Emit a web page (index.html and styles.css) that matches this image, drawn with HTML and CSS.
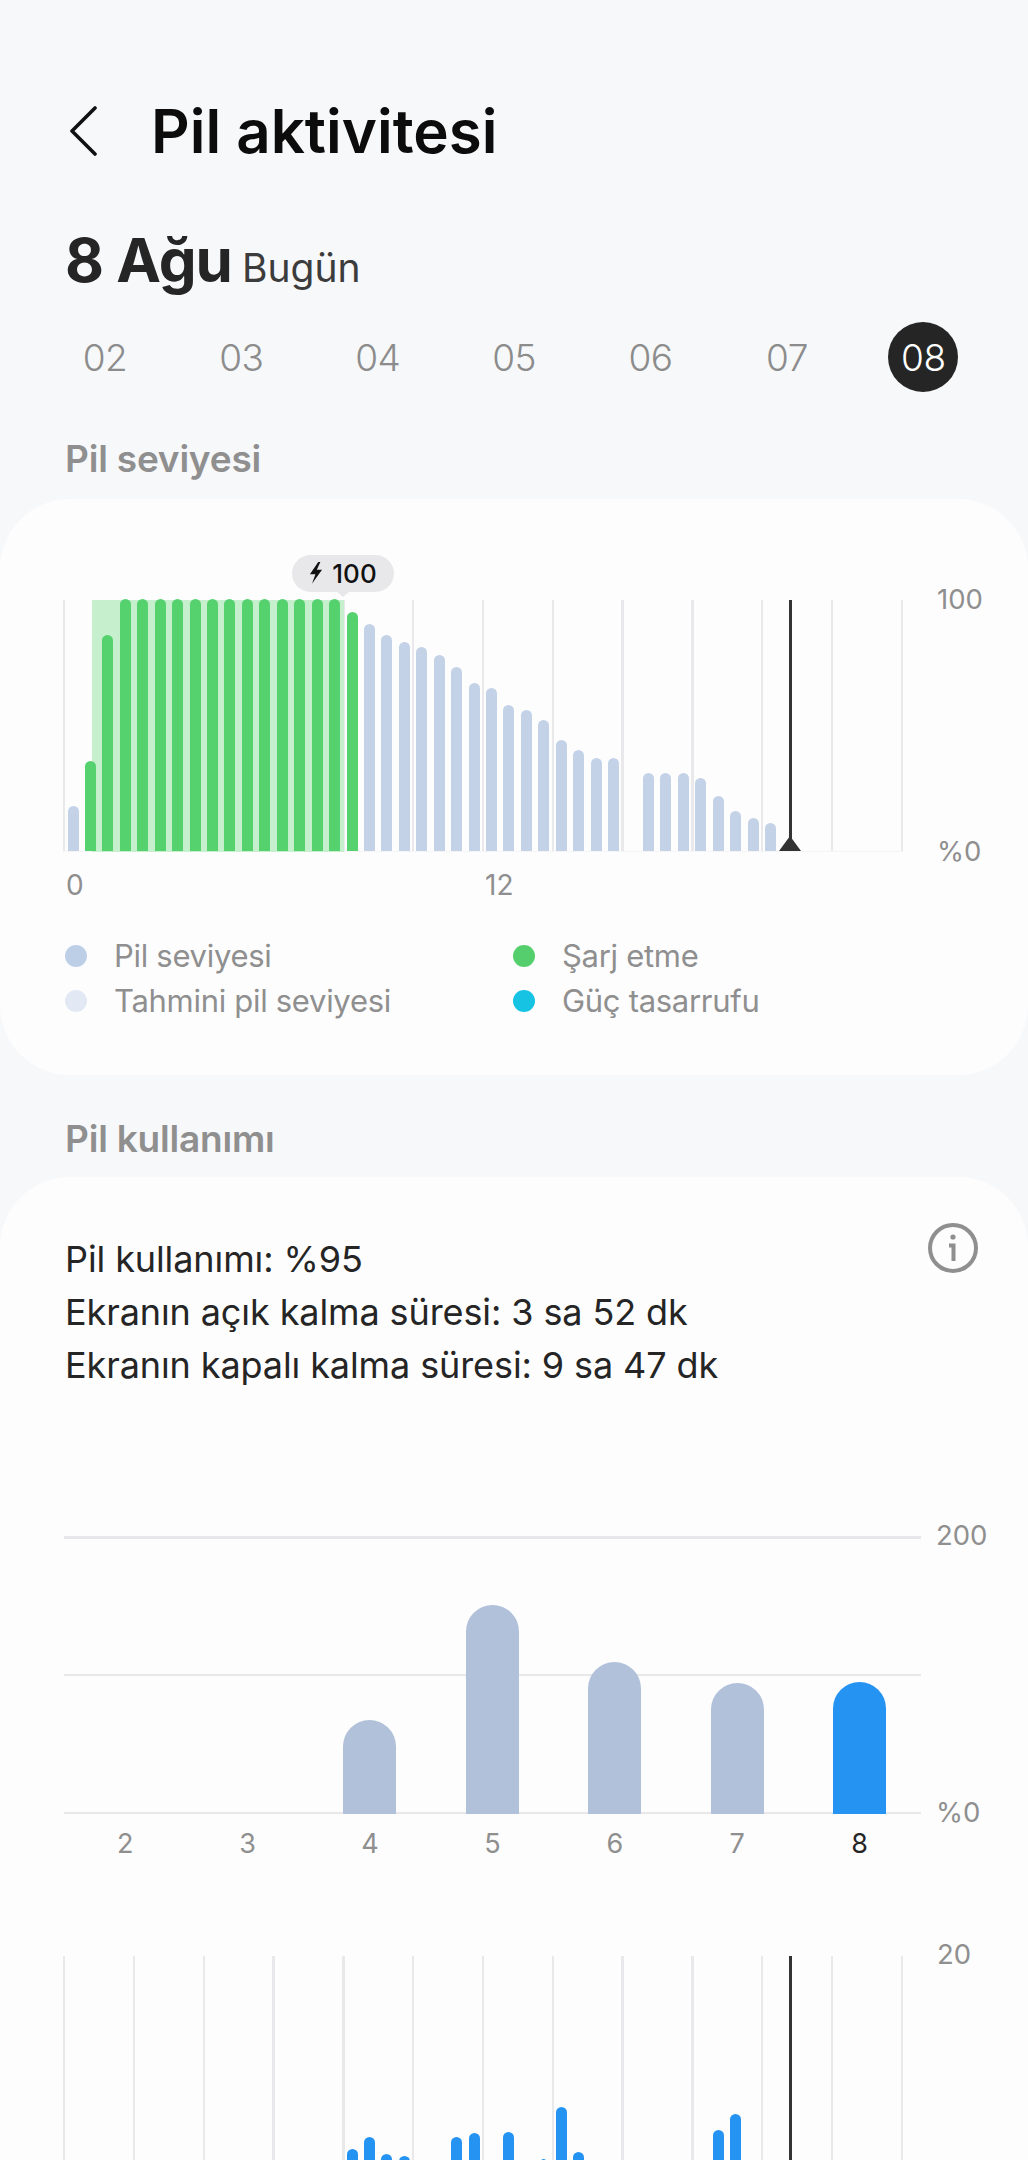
FILE: index.html
```html
<!DOCTYPE html>
<html lang="tr">
<head>
<meta charset="utf-8">
<title>Pil aktivitesi</title>
<link rel="stylesheet" href="styles.css">
</head>
<body>
<main class="page">
  <header class="header">
    <svg class="back" viewBox="0 0 28 50" aria-hidden="true"><path d="M26 2 L3 25 L26 48"/></svg>
    <h1 class="title">Pil aktivitesi</h1>
  </header>
  <div class="date"><span class="date-main">8 Ağu</span><span class="date-sub">Bugün</span></div>
  <nav class="days">
    <span class="day">02</span><span class="day">03</span><span class="day">04</span><span class="day">05</span><span class="day">06</span><span class="day">07</span><span class="day active">08</span>
  </nav>

  <h2 class="section section-first">Pil seviyesi</h2>
  <section class="card card-level">
    <div class="plot">
      <div class="chart chart-level">
        <div class="grid"><s></s><s></s><s></s><s></s><s></s><s></s><s></s><s></s><s></s><s></s><s></s><s></s><s></s></div>
        <div class="charging"></div>
        <div class="bars">
          <i class="bar" style="height:45px"></i><i class="bar g" style="height:90px"></i><i class="bar g" style="height:216px"></i><i class="bar g" style="height:252px"></i><i class="bar g" style="height:252px"></i><i class="bar g" style="height:252px"></i><i class="bar g" style="height:252px"></i><i class="bar g" style="height:252px"></i><i class="bar g" style="height:252px"></i><i class="bar g" style="height:252px"></i><i class="bar g" style="height:252px"></i><i class="bar g" style="height:252px"></i><i class="bar g" style="height:252px"></i><i class="bar g" style="height:252px"></i><i class="bar g" style="height:252px"></i><i class="bar g" style="height:252px"></i><i class="bar g" style="height:239px"></i><i class="bar" style="height:227px"></i><i class="bar" style="height:216px"></i><i class="bar" style="height:209px"></i><i class="bar" style="height:204px"></i><i class="bar" style="height:196px"></i><i class="bar" style="height:184px"></i><i class="bar" style="height:168px"></i><i class="bar" style="height:163px"></i><i class="bar" style="height:146px"></i><i class="bar" style="height:141px"></i><i class="bar" style="height:131px"></i><i class="bar" style="height:111px"></i><i class="bar" style="height:101px"></i><i class="bar" style="height:93px"></i><i class="bar" style="height:93px"></i><i class="bar"></i><i class="bar" style="height:78px"></i><i class="bar" style="height:78px"></i><i class="bar" style="height:78px"></i><i class="bar" style="height:73px"></i><i class="bar" style="height:55px"></i><i class="bar" style="height:40px"></i><i class="bar" style="height:33px"></i><i class="bar" style="height:28px"></i>
        </div>
        <div class="now"></div>
        <div class="now-mark"></div>
        <div class="tip">
          <svg class="bolt" viewBox="0 0 14 22" aria-hidden="true"><path d="M8.7 0 L0.7 11.7 H6 L2.7 20.7 L12.3 7.3 H7.3 L10.7 0 Z"/></svg>
          <span>100</span>
        </div>
      </div>
      <div class="y-axis"><span>100</span><span>%0</span></div>
    </div>
    <div class="x-hours"><span>0</span><span>12</span></div>
    <ul class="legend">
      <li class="legend-item"><b class="dot dot-level"></b>Pil seviyesi</li>
      <li class="legend-item"><b class="dot dot-charge"></b>Şarj etme</li>
      <li class="legend-item"><b class="dot dot-est"></b>Tahmini pil seviyesi</li>
      <li class="legend-item"><b class="dot dot-save"></b>Güç tasarrufu</li>
    </ul>
  </section>

  <h2 class="section section-second">Pil kullanımı</h2>
  <section class="card card-usage">
    <div class="usage-head">
      <p class="usage-text">Pil kullanımı: %95<br>Ekranın açık kalma süresi: 3 sa 52 dk<br>Ekranın kapalı kalma süresi: 9 sa 47 dk</p>
      <svg class="info" viewBox="0 0 50 50" aria-hidden="true"><circle cx="25" cy="25" r="23"/><path d="M21 22.5 H25.5 V38"/><circle class="info-dot" cx="25" cy="14" r="2.6"/></svg>
    </div>
    <div class="plot plot-week">
      <div class="week">
        <div class="hlines"><s></s><s></s><s></s></div>
        <div class="week-bars">
          <span class="week-col"></span>
          <span class="week-col"></span>
          <span class="week-col"><i class="week-bar" style="height:94px"></i></span>
          <span class="week-col"><i class="week-bar" style="height:209px"></i></span>
          <span class="week-col"><i class="week-bar" style="height:152px"></i></span>
          <span class="week-col"><i class="week-bar" style="height:131px"></i></span>
          <span class="week-col"><i class="week-bar today" style="height:132px"></i></span>
        </div>
      </div>
      <div class="y-axis y-week"><span>200</span><span>%0</span></div>
    </div>
    <div class="x-days"><span>2</span><span>3</span><span>4</span><span>5</span><span>6</span><span>7</span><span class="x-today">8</span></div>
    <div class="plot plot-hours">
      <div class="chart">
        <div class="grid"><s></s><s></s><s></s><s></s><s></s><s></s><s></s><s></s><s></s><s></s><s></s><s></s><s></s></div>
        <div class="bars">
          <i class="bar"></i><i class="bar"></i><i class="bar"></i><i class="bar"></i><i class="bar"></i><i class="bar"></i><i class="bar"></i><i class="bar"></i><i class="bar"></i><i class="bar"></i><i class="bar"></i><i class="bar"></i><i class="bar"></i><i class="bar"></i><i class="bar"></i><i class="bar"></i>
          <i class="bar u" style="height:59px"></i><i class="bar u" style="height:71px"></i><i class="bar u" style="height:54px"></i><i class="bar u" style="height:52px"></i><i class="bar"></i><i class="bar"></i><i class="bar u" style="height:71px"></i><i class="bar u" style="height:75px"></i><i class="bar"></i><i class="bar u" style="height:76px"></i><i class="bar"></i><i class="bar u thin" style="height:49px"></i><i class="bar u" style="height:101px"></i><i class="bar u" style="height:56px"></i><i class="bar"></i><i class="bar"></i><i class="bar"></i><i class="bar"></i><i class="bar"></i><i class="bar"></i><i class="bar"></i><i class="bar u" style="height:78px"></i><i class="bar u" style="height:94px"></i><i class="bar u thin" style="height:48px"></i>
        </div>
        <div class="now"></div>
      </div>
      <div class="y-axis y-hours"><span>20</span></div>
    </div>
  </section>
</main>
</body>
</html>
```

FILE: styles.css
```css
* { box-sizing: border-box; }
html, body { margin: 0; padding: 0; }
body { font-family: "Inter", "Roboto", "Liberation Sans", sans-serif; color: #252525; }

.page {
  width: 1028px;
  height: 2160px;
  overflow: hidden;
  background: #f7f8fa;
}

.header {
  display: flex;
  align-items: center;
  height: 100px;
  margin-top: 81px;
  padding-left: 69px;
}
.back { width: 28px; height: 50px; margin-top: -1px; fill: none; stroke: #111; stroke-width: 3.6; stroke-linecap: round; stroke-linejoin: round; }
.title { margin: 0 0 0 54px; font-size: 60px; line-height: 100px; font-weight: 600; color: #0c0c0c; }

.date {
  display: flex;
  align-items: baseline;
  gap: 10px;
  height: 80px;
  margin-top: 39px;
  padding-left: 65px;
  line-height: 80px;
}
.date-main { font-size: 60px; font-weight: 700; letter-spacing: -1px; }
.date-sub { font-size: 39px; font-weight: 400; color: #3c3c3c; }

.days {
  display: flex;
  gap: 66.4px;
  margin-top: 22px;
  padding-left: 70px;
}
.day {
  display: flex;
  align-items: center;
  justify-content: center;
  width: 70px;
  height: 70px;
  border-radius: 50%;
  font-size: 37px;
  font-weight: 300;
  color: #8c8c8c;
  letter-spacing: -.5px;
}
.day.active { background: #252525; color: #fff; }

.section {
  margin: 0;
  padding-left: 65px;
  font-size: 37px;
  font-weight: 600;
  line-height: 44px;
  color: #8f8f8f;
  letter-spacing: -.2px;
}
.section-first { margin-top: 45px; }
.section-second { margin-top: 42px; }

.card { background: #fdfdfe; border-radius: 70px; }
.card-level { height: 576px; margin-top: 18px; padding-top: 101px; }
.card-usage { height: 1200px; margin-top: 16px; padding-top: 56px; }

.plot { display: flex; align-items: flex-start; padding-left: 63px; }

.chart { position: relative; width: 840px; height: 252px; flex: none; }
.chart-level { border-bottom: 1px solid #f5f5f7; }
.grid { position: absolute; inset: 0; display: flex; justify-content: space-between; }
.grid s { display: block; width: 2.4px; background: #e9e9ec; }
.charging { position: absolute; left: 29px; top: 0; width: 252px; height: 252px; background: #c5efcd; }

.bars { position: absolute; left: 4.5px; right: 0; bottom: 0; display: flex; align-items: flex-end; gap: 6.45px; }
.bar { display: block; flex: none; width: 11px; border-radius: 5.5px 5.5px 0 0; background: #c3d2e7; }
.bar.g { background: #55d16e; }
.bar.u { background: #2493f2; }
.bar.thin { width: 5px; margin: 0 3px; }

.now { position: absolute; left: 726px; top: 0; bottom: 0; width: 2.5px; background: #333; }
.now-mark { position: absolute; left: 716px; bottom: 0; width: 0; height: 0; border-left: 11.5px solid transparent; border-right: 11.5px solid transparent; border-bottom: 15px solid #333; }

.tip {
  position: absolute;
  left: 229px;
  top: -45px;
  display: flex;
  align-items: center;
  justify-content: center;
  gap: 8px;
  width: 102px;
  height: 37px;
  border-radius: 18.5px;
  background: #e8e8ea;
  font-size: 26px;
  font-weight: 500;
  color: #111;
}
.tip::after {
  content: "";
  position: absolute;
  left: 45px;
  top: 37px;
  border-left: 6px solid transparent;
  border-right: 6px solid transparent;
  border-top: 5px solid #e8e8ea;
}
.bolt { width: 15px; height: 23px; fill: #111; }

.y-axis {
  display: flex;
  flex-direction: column;
  justify-content: space-between;
  flex: none;
  height: 280px;
  margin-top: -15px;
  margin-left: 34px;
  font-size: 27.5px;
  line-height: 28px;
  color: #8f8f8f;
}

.x-hours {
  display: grid;
  grid-template-columns: 419px auto;
  height: 28px;
  margin-top: 6px;
  padding-left: 66px;
  font-size: 28px;
  line-height: 28px;
  color: #8f8f8f;
}

.legend {
  display: grid;
  grid-template-columns: 448px auto;
  grid-auto-rows: 45px;
  margin: 0;
  margin-top: 34px;
  padding: 0 0 0 65px;
  list-style: none;
}
.legend-item { display: flex; align-items: center; gap: 27px; font-size: 31px; color: #8f8f8f; letter-spacing: -.3px; }
.dot { display: block; flex: none; width: 22px; height: 22px; border-radius: 50%; }
.dot-level { background: #bdcfe6; }
.dot-est { background: #e2e9f4; }
.dot-charge { background: #55cf6d; }
.dot-save { background: #16c3e3; }

.usage-head { display: flex; justify-content: space-between; align-items: flex-start; padding: 0 50px 0 65px; }
.usage-text { margin: 0; font-size: 36px; line-height: 53px; color: #252525; letter-spacing: -.1px; }
.info { flex: none; width: 50px; height: 50px; margin-top: -10px; fill: none; stroke: #8f8f8f; stroke-width: 4; }
.info-dot { fill: #8f8f8f; stroke: none; }

.plot-week { margin-top: 144px; padding-left: 64px; }
.week { position: relative; width: 857px; height: 278px; flex: none; }
.hlines { position: absolute; inset: 0; display: flex; flex-direction: column; justify-content: space-between; }
.hlines s { display: block; height: 2.5px; background: #e8e8eb; }
.week-bars {
  position: absolute;
  left: 0;
  right: 0;
  bottom: 0;
  display: grid;
  grid-template-columns: repeat(7, 122.4px);
  align-items: end;
  height: 278px;
}
.week-col { display: flex; align-items: flex-end; justify-content: center; height: 100%; }
.week-bar { display: block; width: 53px; border-radius: 26.5px 26.5px 0 0; background: #b1c1da; }
.week-bar.today { background: #2493f2; }
.y-week { height: 305px; margin-top: -15px; margin-left: 15px; }

.x-days {
  display: grid;
  grid-template-columns: repeat(7, 122.4px);
  margin-top: 4px;
  padding-left: 64px;
  font-size: 27px;
  line-height: 28px;
  text-align: center;
  color: #8f8f8f;
}
.x-today { color: #252525; }

.plot-hours { margin-top: 98px; }
.y-hours { height: 28px; margin-top: -16px; }
```
